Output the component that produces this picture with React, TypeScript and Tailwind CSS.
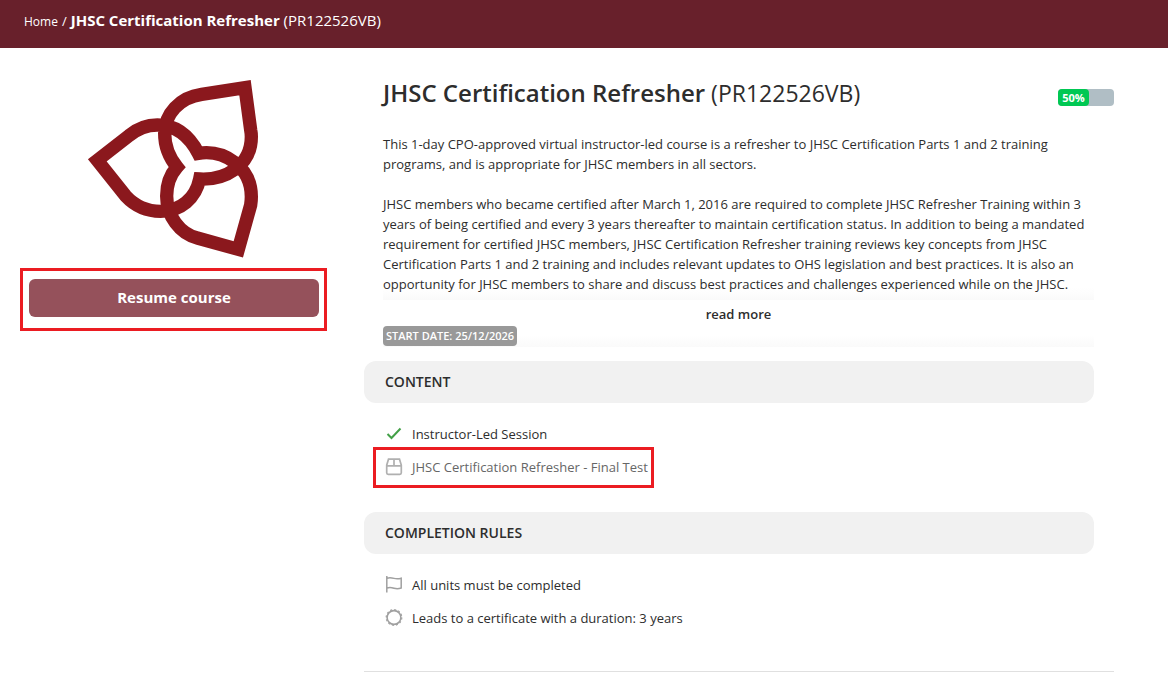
import type { ReactNode } from "react";

const iconProps = {
  width: 18,
  height: 18,
  viewBox: "0 0 18 18",
  fill: "none",
  strokeWidth: 1.5,
  "aria-hidden": true,
} as const;

function CheckIcon() {
  return (
    <svg {...iconProps} stroke="#43a047" strokeWidth={2}>
      <path d="M2.500 9l4 4L15.500 3.500" />
    </svg>
  );
}

function PackageIcon() {
  return (
    <svg {...iconProps} stroke="#b0b0b0" strokeWidth={1.7}>
      <path d="M3.500 1.200h11l1.800 6v7.600a1.500 1.500 0 0 1-1.500 1.500H3.200a1.500 1.500 0 0 1-1.500-1.500V7.200l1.800-6zM1.700 7.800h14.600M9 1.200v6.600" />
    </svg>
  );
}

function FlagIcon() {
  return (
    <svg {...iconProps} stroke="#a0a0a0">
      <path d="M1.800 0v16.500M2 2.200c2.500-.8 4.500-.5 7 .2s4.500.7 7.200-.2v9.800c-2.700.9-4.700.9-7.200.2s-4.500-1-7-.2" />
    </svg>
  );
}

function BadgeIcon() {
  return (
    <svg {...iconProps} stroke="#a0a0a0">
      <circle cx="9" cy="8.500" r="6.900" strokeWidth={1.6} />
      <circle cx="9" cy="8.500" r="7.800" strokeWidth={1.2} strokeDasharray="2.040 2.040" />
    </svg>
  );
}

function Logo() {
  return (
    <svg
      viewBox="0 0 570 585"
      className="w-[190px]"
      fill="none"
      stroke="#8b181d"
      strokeWidth={40}
      strokeMiterlimit={10}
      role="img"
      aria-label="Course logo"
    >
      <path
        d="M358 250C330 196 288 165 235 165C205 165 175 176 150 197L55 271L140 378
        C168 408 205 424 245 424C305 424 350 385 362 327C435 331 517 290 517 200
        Q517 190 515 180L498 53L368 73C302 82 257 132 257 190C257 230 270 262 294 291
        C272 316 263 345 263 378C263 438 303 491 355 504L478 538L515 405
        Q517 392 517 380C517 290 435 238 358 250Z"
      />
    </svg>
  );
}

function SectionTitle({ children }: { children: ReactNode }) {
  return (
    <h2 className="mr-5 flex h-[42px] items-center rounded-xl bg-[#f1f1f1] px-[21px] text-sm font-semibold">
      {children}
    </h2>
  );
}

// Red frame around the parts the learner should look at
function Highlight({ className }: { className: string }) {
  return (
    <span
      className={`pointer-events-none absolute border-[3px] border-[#eb1c22] ${className}`}
    />
  );
}

export default function App() {
  return (
    <div className="bg-white font-['Trebuchet_MS','Open_Sans',sans-serif] text-[13px] leading-5 text-[#2d2d2d]">
      <header className="h-12 bg-[#68202b] px-6 pt-2.5 text-white">
        <nav className="flex items-baseline gap-1">
          <a href="#home" className="text-xs leading-5">
            Home
          </a>
          <span>/</span>
          <h1 className="text-[15px] leading-5">
            <strong className="font-bold">JHSC Certification Refresher</strong>{" "}
            (PR122526VB)
          </h1>
        </nav>
      </header>

      <div className="flex gap-[45px] pt-[22px] pr-[54px] pl-[29px]">
        <aside className="w-[290px] shrink-0">
          <div className="flex h-[209px] items-start justify-center">
            <Logo />
          </div>
          <div className="relative">
            <button
              type="button"
              className="h-[38px] w-full rounded-md bg-[#95515b] pb-0.5 text-[15px] font-bold text-white"
            >
              Resume course
            </button>
            <Highlight className="-top-[11px] -right-2 -bottom-[14px] -left-[9px]" />
          </div>
        </aside>

        <main className="min-w-0 flex-1">
          <div className="flex justify-between pt-2 pl-[19px]">
            <h2 className="text-[23px] leading-[30px]">
              <strong className="text-2xl leading-[30px] font-semibold">
                JHSC Certification Refresher
              </strong>{" "}
              (PR122526VB)
            </h2>
            <div className="mt-[11px] h-[17px] w-14 rounded bg-[#b0bec5]">
              <div className="flex h-full w-[31px] items-center justify-center rounded bg-[#00c853] text-[11px] font-bold text-white">
                50%
              </div>
            </div>
          </div>

          <div className="mt-[26px] mr-5 ml-[19px]">
            <div className="h-[166px] bg-[linear-gradient(to_top,#fafafa,#ffffff_12px)]">
              <p>
                This 1-day CPO-approved virtual instructor-led course is a refresher to JHSC Certification Parts 1 and 2 training
                <br />
                programs, and is appropriate for JHSC members in all sectors.
              </p>
              <p className="mt-5">
                JHSC members who became certified after March 1, 2016 are required to complete JHSC Refresher Training within 3
                <br />
                years of being certified and every 3 years thereafter to maintain certification status. In addition to being a mandated
                <br />
                requirement for certified JHSC members, JHSC Certification Refresher training reviews key concepts from JHSC
                <br />
                Certification Parts 1 and 2 training and includes relevant updates to OHS legislation and best practices. It is also an
                <br />
                opportunity for JHSC members to share and discuss best practices and challenges experienced while on the JHSC.
              </p>
            </div>
            <div className="flex h-[47px] flex-col bg-[linear-gradient(to_top,#fafafa,#ffffff_12px)] pt-1">
              <button type="button" className="self-center font-semibold">
                read more
              </button>
              <span className="mt-0.5 flex h-5 items-center self-start rounded bg-[#999999] px-[3px] text-[11px] font-semibold text-white">
                START DATE: 25/12/2026
              </span>
            </div>
          </div>

          <section className="mt-[14px]">
            <SectionTitle>CONTENT</SectionTitle>
            <ul className="flex flex-col gap-[13px] pt-[21px] pl-[21px]">
              <li className="flex items-center gap-[9px]">
                <CheckIcon />
                <a href="#session">Instructor-Led Session</a>
              </li>
              <li className="relative flex items-center gap-[9px] self-start text-[#666666]">
                <PackageIcon />
                <a href="#final-test">JHSC Certification Refresher - Final Test</a>
                <Highlight className="-top-[10px] -right-1.5 -bottom-[11px] -left-3" />
              </li>
            </ul>
          </section>

          <section className="mt-[35px] border-b border-[#e0e0e0] pb-[43px]">
            <SectionTitle>COMPLETION RULES</SectionTitle>
            <ul className="flex flex-col gap-[13px] pt-[21px] pl-[21px]">
              <li className="flex items-center gap-[9px]">
                <FlagIcon />
                All units must be completed
              </li>
              <li className="flex items-center gap-[9px]">
                <BadgeIcon />
                Leads to a certificate with a duration: 3 years
              </li>
            </ul>
          </section>
        </main>
      </div>
    </div>
  );
}
